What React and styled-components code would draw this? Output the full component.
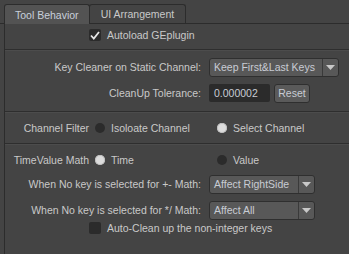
import styled, { createGlobalStyle } from 'styled-components';

const GlobalStyle = createGlobalStyle`
  html, body {
    margin: 0;
    padding: 0;
    background: #444444;
  }
  body {
    font-family: 'Liberation Sans', Arial, sans-serif;
    font-size: 10.5px;
    color: #c9c9c9;
    width: 349px;
    height: 254px;
    overflow: hidden;
  }
`;

const Window = styled.div`
  width: 349px;
  height: 254px;
  display: flex;
  flex-direction: column;
  padding-top: 4px;
  box-sizing: border-box;
`;

const TabBar = styled.div`
  display: flex;
  padding-left: 4px;
  height: 19px;
  border-bottom: 1px solid #2c2c2c;
`;

const Tab = styled.div`
  height: ${(p) => (p.$active ? '20px' : '19px')};
  padding: 0 ${(p) => (p.$active ? '10px' : '11px')};
  display: flex;
  align-items: center;
  box-sizing: border-box;
  background: ${(p) => (p.$active ? '#535353' : '#444444')};
  border: 1px solid #2c2c2c;
  border-bottom: none;
  border-radius: 3px 3px 0 0;
  margin-right: -1px;
  color: ${(p) => (p.$active ? '#c8d0dc' : '#c9c9c9')};
  position: relative;
  z-index: ${(p) => (p.$active ? 1 : 0)};
`;

const Panel = styled.div`
  flex: 1;
  margin-left: 4px;
  border-left: 1px solid #2c2c2c;
  display: flex;
  flex-direction: column;
`;

const Section = styled.div`
  display: flex;
  flex-direction: column;
  padding: ${(p) => p.$pad || '0'};
`;

const Separator = styled.div`
  height: 1px;
  background: #2e2e2e;
  border-bottom: 1px solid #4c4c4c;
`;

const FormRow = styled.div`
  display: flex;
  align-items: center;
  height: ${(p) => p.$h || '20px'};
  margin-top: ${(p) => p.$mt || '0'};
`;

const Label = styled.div`
  width: ${(p) => p.$w};
  text-align: right;
  flex-shrink: 0;
  white-space: nowrap;
  padding-right: ${(p) => p.$pr || '8px'};
  box-sizing: border-box;
`;

const Box = styled.div`
  width: 12px;
  height: 12px;
  border-radius: 2px;
  background: #2b2b2b;
  display: flex;
  align-items: center;
  justify-content: center;
  margin-right: 6px;
`;

const CheckText = styled.span`
  white-space: nowrap;
`;

const Select = styled.div`
  width: ${(p) => p.$w};
  height: 19px;
  box-sizing: border-box;
  background: #585858;
  border: 1px solid #2f2f2f;
  border-radius: 3px;
  display: flex;
  align-items: stretch;
  color: #c8ccd4;
`;

const SelectValue = styled.div`
  flex: 1;
  display: flex;
  align-items: center;
  padding-left: 4px;
  white-space: nowrap;
  overflow: hidden;
`;

const SelectArrow = styled.div`
  width: 15px;
  border-left: 1px solid #3a3a3a;
  display: flex;
  align-items: center;
  justify-content: center;
`;

const NumberInput = styled.div`
  width: 61px;
  height: 18px;
  box-sizing: border-box;
  background: #2b2b2b;
  border-radius: 2px;
  display: flex;
  align-items: center;
  padding-left: 5px;
  margin-right: 4px;
  color: #c8ccd4;
`;

const Button = styled.div`
  width: 36px;
  height: 19px;
  box-sizing: border-box;
  background: #5a5a5a;
  border: 1px solid #2f2f2f;
  border-radius: 3px;
  display: flex;
  align-items: center;
  justify-content: center;
  color: #c8ccd4;
`;

const RadioItem = styled.div`
  display: flex;
  align-items: center;
  width: ${(p) => p.$w || 'auto'};
`;

const Dot = styled.div`
  width: 10px;
  height: 10px;
  border-radius: 50%;
  background: ${(p) => (p.$on ? '#dcdcdc' : '#2b2b2b')};
  margin-right: 6px;
  box-shadow: ${(p) => (p.$on ? 'inset 0 0 0 1px #bdbdbd' : 'none')};
`;

const Arrow = () => (
  <svg width="9" height="5" viewBox="0 0 9 5">
    <path d="M0 0 L9 0 L4.5 5 Z" fill="#c8c8c8" />
  </svg>
);

const Check = () => (
  <svg width="10" height="9" viewBox="0 0 10 9">
    <path d="M1 4.5 L3.8 7.5 L9 1" fill="none" stroke="#e6e6e6" strokeWidth="1.8" />
  </svg>
);

const CheckBox = ({ checked, children }) => (
  <>
    <Box>{checked && <Check />}</Box>
    <CheckText>{children}</CheckText>
  </>
);

const Radio = ({ on, w, children }) => (
  <RadioItem $w={w}>
    <Dot $on={on} />
    {children}
  </RadioItem>
);

const Dropdown = ({ w, children }) => (
  <Select $w={w}>
    <SelectValue>{children}</SelectValue>
    <SelectArrow>
      <Arrow />
    </SelectArrow>
  </Select>
);

export default function App() {
  return (
    <>
      <GlobalStyle />
      <Window>
        <TabBar>
          <Tab $active>Tool Behavior</Tab>
          <Tab>UI Arrangement</Tab>
        </TabBar>
        <Panel>
          <Section $pad="4px 0 7px">
            <FormRow $h="14px">
              <Label $w="84px" $pr="0" />
              <CheckBox checked>Autoload GEplugin</CheckBox>
            </FormRow>
          </Section>
          <Separator />
          <Section $pad="6px 0 8px">
            <FormRow>
              <Label $w="204px">Key Cleaner on Static Channel:</Label>
              <Dropdown w="130px">Keep First&amp;Last Keys</Dropdown>
            </FormRow>
            <FormRow $mt="6px">
              <Label $w="204px">CleanUp Tolerance:</Label>
              <NumberInput>0.000002</NumberInput>
              <Button>Reset</Button>
            </FormRow>
          </Section>
          <Separator />
          <Section $pad="5px 0 5px">
            <FormRow>
              <Label $w="90px" $pr="6px">Channel Filter</Label>
              <Radio w="122px">Isoloate Channel</Radio>
              <Radio on>Select Channel</Radio>
            </FormRow>
          </Section>
          <Separator />
          <Section $pad="5px 0 0">
            <FormRow>
              <Label $w="90px" $pr="6px">TimeValue Math</Label>
              <Radio on w="122px">Time</Radio>
              <Radio>Value</Radio>
            </FormRow>
            <FormRow $mt="4px">
              <Label $w="204px">When No key is selected for +- Math:</Label>
              <Dropdown w="106px">Affect RightSide</Dropdown>
            </FormRow>
            <FormRow $mt="6px">
              <Label $w="204px">When No key is selected for */ Math:</Label>
              <Dropdown w="106px">Affect All</Dropdown>
            </FormRow>
            <FormRow $h="14px" $mt="1px">
              <Label $w="84px" $pr="0" />
              <CheckBox>Auto-Clean up the non-integer keys</CheckBox>
            </FormRow>
          </Section>
        </Panel>
      </Window>
    </>
  );
}
